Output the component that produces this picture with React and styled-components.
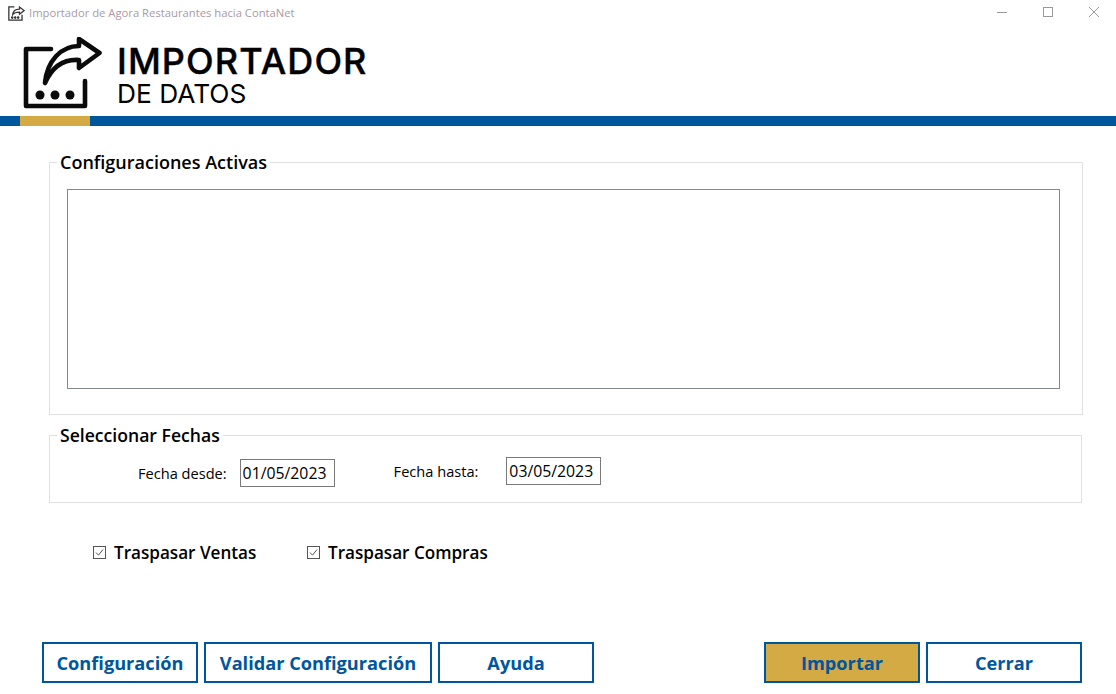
import React from 'react';
import styled, { createGlobalStyle } from 'styled-components';

const GlobalStyle = createGlobalStyle`
  html, body {
    margin: 0;
    padding: 0;
    background: #fff;
  }
  body {
    font-family: "Open Sans", "Noto Sans", "Liberation Sans", sans-serif;
    color: #000;
  }
`;

const Window = styled.div`
  width: 1116px;
  height: 694px;
  display: flex;
  flex-direction: column;
  overflow: hidden;
  background: #fff;
`;

const TitleBar = styled.div`
  height: 24px;
  display: flex;
  align-items: center;
  padding-left: 8px;
`;

const TitleText = styled.span`
  margin-left: 4px;
  font-size: 11.25px;
  color: #a99aa6;
`;

const WindowControls = styled.div`
  margin-left: auto;
  margin-right: -1px;
  display: flex;
  align-items: center;
`;

const ControlButton = styled.div`
  width: 46px;
  height: 22px;
  display: flex;
  align-items: center;
  justify-content: center;
`;

const Header = styled.div`
  height: 92px;
  display: flex;
  align-items: flex-start;
  padding-left: 23px;
`;

const LogoMark = styled.svg`
  margin-top: 13px;
  flex: none;
`;

const LogoText = styled.div`
  margin-left: 14px;
  margin-top: 18px;
  display: flex;
  flex-direction: column;
`;

const LogoTitle = styled.div`
  font-family: Inter, "Liberation Sans", sans-serif;
  font-size: 36px;
  font-weight: 500;
  line-height: 38px;
  letter-spacing: 1.1px;
  -webkit-text-stroke: 0.4px #000;
`;

const LogoSub = styled.div`
  font-family: Inter, "Liberation Sans", sans-serif;
  font-size: 26.3px;
  font-weight: 400;
  line-height: 28px;
`;

const BlueBar = styled.div`
  height: 10px;
  background: #00569d;
  padding-left: 20px;
`;

const GoldTab = styled.div`
  width: 70px;
  height: 10px;
  background: #d4aa45;
`;

const Content = styled.div`
  flex: 1;
  display: flex;
  flex-direction: column;
  padding: 25px 33px 10px 49px;
`;

const Group = styled.fieldset`
  margin: 0;
  padding: 0;
  min-width: 0;
  border: 1px solid #e0e0e0;
  height: ${p => p.$height}px;
  box-sizing: border-box;
  margin-top: ${p => p.$top || 0}px;
  margin-right: ${p => p.$right || 0}px;
`;

const Legend = styled.legend`
  margin-left: 7px;
  padding: 0 3px;
  font-size: ${p => p.$size}px;
  font-weight: 600;
  line-height: 22px;
`;

const ListBox = styled.div`
  height: 200px;
  margin: 16px 22px 0 17px;
  border: 1px solid #828790;
  box-sizing: border-box;
`;

const DateRow = styled.div`
  display: flex;
  align-items: flex-start;
  padding-left: 88px;
  padding-top: 11px;
`;

const DateField = styled.div`
  display: flex;
  align-items: center;
  margin-top: ${p => p.$top}px;
  margin-right: 59px;
`;

const DateLabel = styled.label`
  font-size: 14.6px;
  margin-right: ${p => p.$gap}px;
`;

const DateInput = styled.div`
  width: 95px;
  height: 28px;
  box-sizing: border-box;
  border: 1px solid #7a7a7a;
  padding-left: 2px;
  font-size: 15.8px;
  line-height: 26px;
`;

const CheckRow = styled.div`
  display: flex;
  align-items: center;
  margin-top: 38px;
  padding-left: 44px;
`;

const CheckItem = styled.label`
  display: flex;
  align-items: center;
  width: 214px;
  font-size: 17.1px;
  font-weight: 600;
`;

const CheckBox = styled.span`
  width: 13px;
  height: 13px;
  margin-right: 8px;
  display: flex;
`;

const ButtonRow = styled.div`
  margin-top: auto;
  display: flex;
  gap: 6px;
  margin-left: -7px;
  margin-bottom: 1px;
`;

const Button = styled.button`
  width: ${p => p.$width}px;
  height: 41px;
  padding: 0;
  box-sizing: border-box;
  border: 2px solid #00569d;
  background: ${p => (p.$primary ? '#d4aa45' : '#fff')};
  color: #00569d;
  font-family: inherit;
  font-size: 18.2px;
  font-weight: 700;
  margin-left: ${p => p.$left || 0}px;
`;

function AppIcon() {
  return (
    <svg width="17" height="17" viewBox="0 0 80 80" fill="none" stroke="#333" strokeWidth="6">
      <path d="M30 14H4V76H66V50" />
      <path d="M22 50C24 30 36 24 54 24V14L76 31L54 48V38C40 38 30 40 22 50Z" />
      <circle cx="20" cy="64" r="3" />
      <circle cx="34" cy="64" r="3" />
      <circle cx="48" cy="64" r="3" />
    </svg>
  );
}

function Logo() {
  return (
    <LogoMark width="80" height="76" viewBox="0 0 80 76" fill="none" stroke="#0b0b0b" strokeWidth="4.6" strokeLinecap="round" strokeLinejoin="round">
      <path d="M28 12H3V69H62V44" />
      <path d="M22 46C24 24 38 9 56 9V2L76.5 16L56 31V23C40 22 29 30 22 46Z" />
      <circle cx="17" cy="58" r="4.5" fill="#0b0b0b" stroke="none" />
      <circle cx="32" cy="58" r="4.5" fill="#0b0b0b" stroke="none" />
      <circle cx="47" cy="58" r="4.5" fill="#0b0b0b" stroke="none" />
    </LogoMark>
  );
}

function Check() {
  return (
    <svg width="13" height="13" viewBox="0 0 13 13" fill="none">
      <rect x="0.5" y="0.5" width="12" height="12" stroke="#555" />
      <path d="M3 6.5L5.5 9.2L10 3.5" stroke="#555" />
    </svg>
  );
}

export default function App() {
  return (
    <>
      <GlobalStyle />
      <Window>
        <TitleBar>
          <AppIcon />
          <TitleText>Importador de Agora Restaurantes hacia ContaNet</TitleText>
          <WindowControls>
            <ControlButton>
              <svg width="10" height="10" viewBox="0 0 10 10"><path d="M0 5.5H10" stroke="#999" /></svg>
            </ControlButton>
            <ControlButton>
              <svg width="10" height="10" viewBox="0 0 10 10"><rect x="0.5" y="0.5" width="9" height="9" fill="none" stroke="#999" /></svg>
            </ControlButton>
            <ControlButton>
              <svg width="10" height="10" viewBox="0 0 10 10"><path d="M0 0L10 10M10 0L0 10" stroke="#999" /></svg>
            </ControlButton>
          </WindowControls>
        </TitleBar>
        <Header>
          <Logo />
          <LogoText>
            <LogoTitle>IMPORTADOR</LogoTitle>
            <LogoSub>DE DATOS</LogoSub>
          </LogoText>
        </Header>
        <BlueBar><GoldTab /></BlueBar>
        <Content>
          <Group $height={264}>
            <Legend $size={18}>Configuraciones Activas</Legend>
            <ListBox />
          </Group>
          <Group $height={79} $top={9} $right={1}>
            <Legend $size={17.6}>Seleccionar Fechas</Legend>
            <DateRow>
              <DateField $top={2}>
                <DateLabel $gap={13}>Fecha desde:</DateLabel>
                <DateInput>01/05/2023</DateInput>
              </DateField>
              <DateField $top={0}>
                <DateLabel $gap={28}>Fecha hasta:</DateLabel>
                <DateInput>03/05/2023</DateInput>
              </DateField>
            </DateRow>
          </Group>
          <CheckRow>
            <CheckItem><CheckBox><Check /></CheckBox>Traspasar Ventas</CheckItem>
            <CheckItem><CheckBox><Check /></CheckBox>Traspasar Compras</CheckItem>
          </CheckRow>
          <ButtonRow>
            <Button $width={156}>Configuración</Button>
            <Button $width={228}>Validar Configuración</Button>
            <Button $width={156}>Ayuda</Button>
            <Button $width={156} $left={164} $primary>Importar</Button>
            <Button $width={156}>Cerrar</Button>
          </ButtonRow>
        </Content>
      </Window>
    </>
  );
}
